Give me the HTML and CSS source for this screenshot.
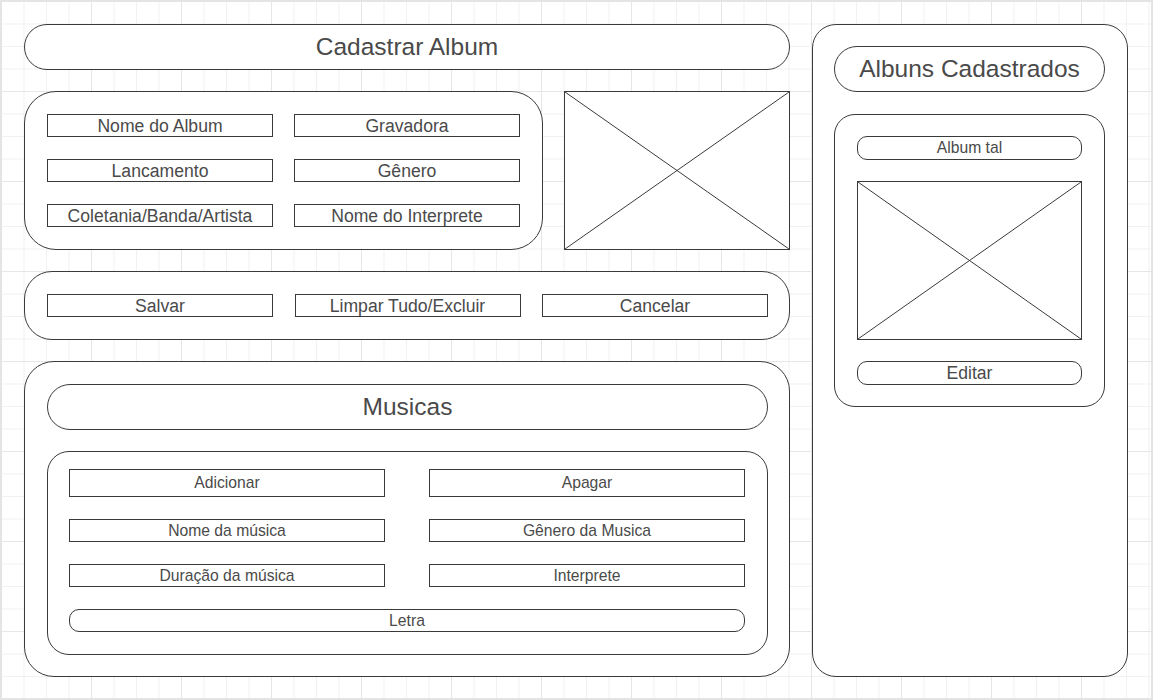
FILE: index.html
```html
<!DOCTYPE html>
<html lang="pt-BR">
<head>
  <meta charset="UTF-8">
  <meta name="viewport" content="width=device-width, initial-scale=1.0">
  <title>Cadastrar Album</title>
  <link rel="stylesheet" href="styles.css">
</head>
<body>

  <div class="canvas">

    <!-- Coluna da esquerda: cadastro -->
    <div class="left-col">
      <div class="pill title">Cadastrar Album</div>

      <div class="form-row">
        <div class="panel form-fields">
          <div class="field">Nome do Album</div>
          <div class="field">Gravadora</div>
          <div class="field">Lancamento</div>
          <div class="field">Gênero</div>
          <div class="field">Coletania/Banda/Artista</div>
          <div class="field">Nome do Interprete</div>
        </div>
        <div class="placeholder cover">
          <svg viewBox="0 0 100 100" preserveAspectRatio="none">
            <line x1="0" y1="0" x2="100" y2="100" vector-effect="non-scaling-stroke"/>
            <line x1="100" y1="0" x2="0" y2="100" vector-effect="non-scaling-stroke"/>
          </svg>
        </div>
      </div>

      <div class="panel actions">
        <div class="field">Salvar</div>
        <div class="field">Limpar Tudo/Excluir</div>
        <div class="field">Cancelar</div>
      </div>

      <!-- Musicas -->
      <div class="panel musicas">
        <div class="pill title">Musicas</div>
        <div class="panel music-fields">
          <div class="field small tall">Adicionar</div>
          <div class="field small tall">Apagar</div>
          <div class="field small">Nome da música</div>
          <div class="field small">Gênero da Musica</div>
          <div class="field small">Duração da música</div>
          <div class="field small">Interprete</div>
          <div class="field small round letra">Letra</div>
        </div>
      </div>
    </div>

    <!-- Coluna da direita: albuns cadastrados -->
    <div class="panel albums">
      <div class="pill title">Albuns Cadastrados</div>
      <div class="panel album-card">
        <div class="field small round">Album tal</div>
        <div class="placeholder album-cover">
          <svg viewBox="0 0 100 100" preserveAspectRatio="none">
            <line x1="0" y1="0" x2="100" y2="100" vector-effect="non-scaling-stroke"/>
            <line x1="100" y1="0" x2="0" y2="100" vector-effect="non-scaling-stroke"/>
          </svg>
        </div>
        <div class="field round">Editar</div>
      </div>
    </div>

  </div>

</body>
</html>
```

FILE: styles.css
```css
* {
  box-sizing: border-box;
}

html, body {
  margin: 0;
  padding: 0;
}

body {
  font-family: 'Liberation Sans', Arial, sans-serif;
  color: #4a4a4a;
  width: 1153px;
  height: 700px;
  border: 2px solid #e4e4e4;
  padding: 22px;
  background-color: #ffffff;
  background-image:
    linear-gradient(to right, #e6e6e6 1px, transparent 1px),
    linear-gradient(to bottom, #e6e6e6 1px, transparent 1px),
    linear-gradient(to right, #f1f1f1 1px, transparent 1px),
    linear-gradient(to bottom, #f1f1f1 1px, transparent 1px);
  background-size: 90px 90px, 90px 90px, 22.5px 22.5px, 22.5px 22.5px;
  background-origin: border-box;
  background-position: 1px 1px;
}

.canvas {
  display: flex;
  gap: 22px;
  align-items: flex-start;
}

/* shared shapes */
.panel {
  background: #fff;
  border: 1px solid #3a3a3a;
  border-radius: 30px;
}

.pill {
  background: #fff;
  border: 1px solid #3a3a3a;
  border-radius: 23px;
  height: 46px;
  display: flex;
  align-items: center;
  justify-content: center;
}

.title {
  font-size: 24.5px;
}

.field {
  background: #fff;
  border: 1px solid #3a3a3a;
  height: 23px;
  padding-top: 2px;
  font-size: 17.6px;
  display: flex;
  align-items: center;
  justify-content: center;
  white-space: nowrap;
  line-height: 1;
}

.field.small {
  font-size: 15.7px;
  padding-top: 0;
}

.field.tall {
  height: 28px;
}

.field.round {
  border-radius: 10px;
  height: 24px;
}

.placeholder {
  background: #fff;
  border: 1px solid #3a3a3a;
}

.placeholder svg {
  display: block;
  width: 100%;
  height: 100%;
}

.placeholder line {
  stroke: #3a3a3a;
  stroke-width: 1;
}

/* left column */
.left-col {
  width: 766px;
  display: flex;
  flex-direction: column;
  gap: 21px;
}

.form-row {
  display: flex;
  gap: 21px;
  height: 159px;
}

.form-fields {
  width: 519px;
  border-radius: 32px;
  padding: 22px;
  display: grid;
  grid-template-columns: 226px 226px;
  grid-template-rows: 23px 23px 23px;
  column-gap: 21px;
  row-gap: 22px;
}

.cover {
  width: 226px;
  height: 159px;
}

.actions {
  height: 69px;
  border-radius: 28px;
  padding: 22px 21px 22px 22px;
  display: flex;
  justify-content: space-between;
}

.actions .field {
  width: 226px;
}

.musicas {
  height: 316px;
  padding: 22px 21px 21px 22px;
  display: flex;
  flex-direction: column;
  gap: 21px;
}

.music-fields {
  height: 204px;
  border-radius: 22px;
  padding: 17px 21px 0 21px;
  display: grid;
  grid-template-columns: 316px 316px;
  grid-template-rows: 28px 23px 23px 23px;
  column-gap: 44px;
  row-gap: 22px;
  align-content: start;
}

.music-fields .letra {
  grid-column: 1 / 3;
  height: 23px;
}

/* right column */
.albums {
  width: 316px;
  height: 653px;
  border-radius: 24px;
  padding: 21px 22px 21px 21px;
  display: flex;
  flex-direction: column;
  gap: 22px;
}

.album-card {
  height: 293px;
  border-radius: 21px;
  padding: 21px 22px;
  display: flex;
  flex-direction: column;
  gap: 21px;
}

.album-cover {
  height: 159px;
}
```
